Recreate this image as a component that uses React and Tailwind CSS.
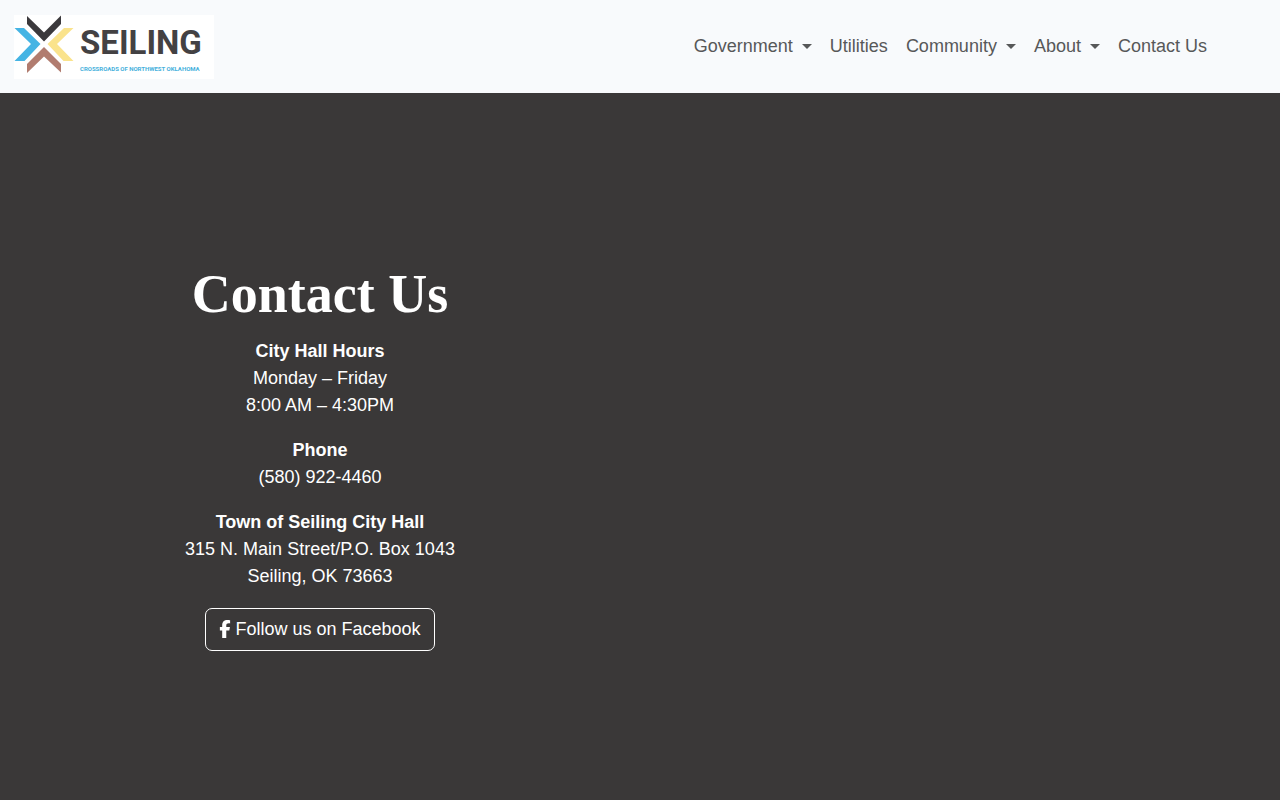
import React from 'react'

const links = [
  { label: 'Government', menu: true },
  { label: 'Utilities' },
  { label: 'Community', menu: true },
  { label: 'About', menu: true },
  { label: 'Contact Us' },
]

function Logo() {
  return (
    <a href="#" aria-label="Seiling home" className="flex w-[200px] h-16 bg-white">
      <svg viewBox="0 0 62 64" className="w-[62px] h-16 shrink-0" aria-hidden="true">
        <path fill="#3b393c" d="M13 1 30 17.500 47 0.500V9L30 26.500 13 9Z" />
        <path fill="#45b4e4" d="M0.500 13H10L26.500 29 10.500 46H0.500L17 29Z" />
        <path fill="#fae38c" d="M59.500 13H50L33.500 29 49.500 46H59.500L43 29Z" />
        <path fill="#b17c6f" d="M13 49 30 32 47 49V57.500L30 41.500 13 58Z" />
      </svg>
      <span className="flex flex-col pl-1 pt-3 whitespace-nowrap font-[Roboto,'Liberation_Sans',sans-serif]">
        <span className="text-[33px] leading-8 font-bold text-[#434143]">SEILING</span>
        <span className="text-[6px] leading-5 font-bold text-[#45b0dc]">CROSSROADS OF NORTHWEST OKLAHOMA</span>
      </span>
    </a>
  )
}

function FacebookIcon() {
  return (
    <svg viewBox="0 0 320 512" className="w-[12px] h-[18px] mb-0.5" fill="currentColor" aria-hidden="true">
      <path d="M80 299.3V512H196V299.3h86.5l18-97.8H196V166.9c0-51.7 20.3-71.5 72.7-71.5c16.3 0 29.4 .4 37 1.2V7.9C291.4 4 256.4 0 236.2 0C129.3 0 80 50.500 80 159.400v42.100H14v97.800H80z" />
    </svg>
  )
}

function Navbar() {
  return (
    <header className="flex items-center justify-between bg-[#f8fafc] pl-[14px] pr-16 h-[93px]">
      <Logo />
      <nav className="flex text-[#575859]">
        {links.map(l => l.menu ? (
          <button key={l.label} type="button" className="flex items-center px-[9px] py-2">
            {l.label}
            <svg viewBox="0 0 10 5" className="ml-[9px] w-[10px] h-[5px]" aria-hidden="true">
              <path fill="currentColor" d="M0 0h10L5 5z" />
            </svg>
          </button>
        ) : (
          <a key={l.label} href="#" className="px-[9px] py-2">{l.label}</a>
        ))}
      </nav>
    </header>
  )
}

export default function App() {
  return (
    <div className="flex flex-col min-h-screen bg-[#3a3838] font-['Liberation_Sans',Arial,sans-serif] text-[18px] leading-[27px]">
      <Navbar />
      <main className="grid grid-cols-2 flex-1 text-white">
        <section className="flex flex-col items-center text-center pt-[168px] pb-16">
          <h1 className="font-['Liberation_Serif',serif] text-[54px] leading-[67px] font-bold mb-[10px]">Contact Us</h1>
          <p className="mb-[18px]">
            <strong>City Hall Hours</strong><br />
            Monday – Friday<br />
            8:00 AM – 4:30PM
          </p>
          <p className="mb-[18px]">
            <strong>Phone</strong><br />
            (580) 922-4460
          </p>
          <p className="mb-[18px]">
            <strong>Town of Seiling City Hall</strong><br />
            315 N. Main Street/P.O. Box 1043<br />
            Seiling, OK 73663
          </p>
          <a href="#" className="flex items-center gap-1 border border-white rounded-[7px] px-[13px] py-[7px]">
            <FacebookIcon />
            Follow us on Facebook
          </a>
        </section>
      </main>
    </div>
  )
}
